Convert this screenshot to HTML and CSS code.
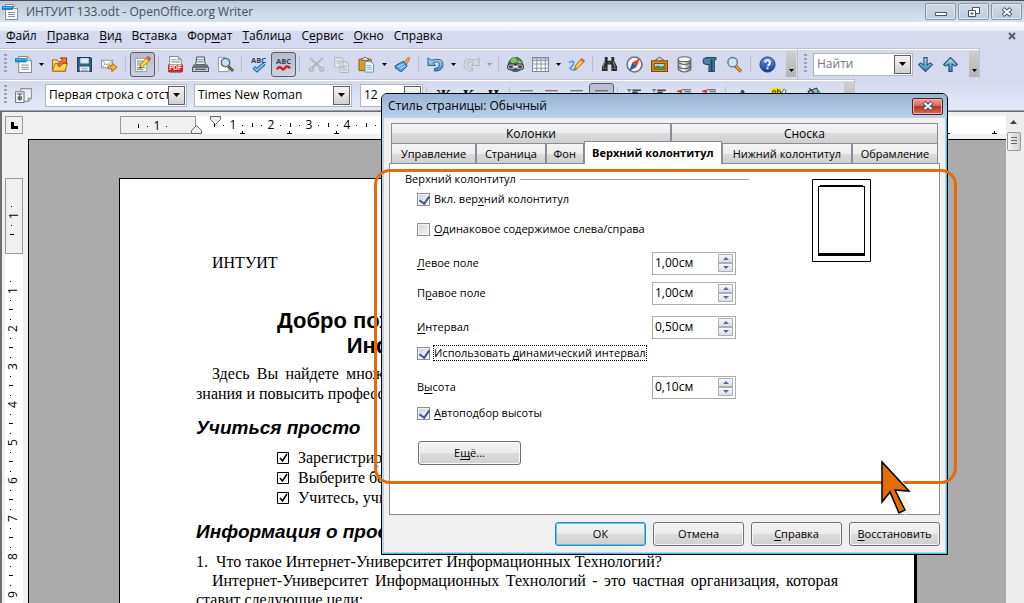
FILE: index.html
```html
<!DOCTYPE html>
<html lang="ru">
<head>
<meta charset="utf-8">
<title>ИНТУИТ 133.odt - OpenOffice.org Writer</title>
<link rel="stylesheet" href="styles.css">
</head>
<body>
<svg class="sprite" aria-hidden="true">
  <defs>
    <linearGradient id="gBlue" x1="0" y1="0" x2="0" y2="1"><stop offset="0" stop-color="#b9e2f6"/><stop offset="1" stop-color="#3585b4"/></linearGradient>
    <linearGradient id="gGold" x1="0" y1="0" x2="0" y2="1"><stop offset="0" stop-color="#ffe88c"/><stop offset="1" stop-color="#e09a16"/></linearGradient>
    <linearGradient id="gHelp" x1="0" y1="0" x2="0" y2="1"><stop offset="0" stop-color="#6e97e4"/><stop offset="1" stop-color="#12399a"/></linearGradient>
    <linearGradient id="gDb" x1="0" y1="0" x2="1" y2="0"><stop offset="0" stop-color="#9a9a9a"/><stop offset=".4" stop-color="#fff"/><stop offset="1" stop-color="#777"/></linearGradient>
  </defs>
  <symbol id="i-doc" viewBox="0 0 16 16"><path d="M3.500.5h8l4 4v11h-12z" fill="#fff" stroke="#888c92"/><path d="M11.500.5v4h4" fill="#ddd" stroke="#888c92"/><path d="M0 2h11v4H0z" fill="#1686c8"/><path d="M1 3h9v1H1z" fill="#5dbbea"/><path d="M6 8.500h7M6 10.500h7M6 12.500h7" stroke="#8a9098"/></symbol>
  <symbol id="i-open" viewBox="0 0 18 17"><path d="M1.500 15.500v-12h5l1 2h8v10z" fill="url(#gGold)" stroke="#9c6414"/><path d="M1.500 15.500l3-8h13l-3 8z" fill="#ffd75e" stroke="#a86c14"/><path d="M7 9l5-5-2-2.500h6.500V8L14 6l-5 5z" fill="#f47b20" stroke="#9b2f0a"/></symbol>
  <symbol id="i-save" viewBox="0 0 16 16"><path d="M1.500 1.500h12l1 1v12h-13z" fill="#30617f" stroke="#173b54"/><path d="M4 2h8v5H4z" fill="#dce9f0"/><path d="M3.500 10h9v4.500h-9z" fill="#f4f6f8"/><path d="M5 11.500h6M5 13.500h6" stroke="#8fa4b2"/></symbol>
  <symbol id="i-mail" viewBox="0 0 18 16"><path d="M.5 3.500h12v8H.5z" fill="#fff" stroke="#8f949a"/><path d="M.5 3.500l6 5 6-5M.5 11.500l4-4M12.500 11.500l-4-4" fill="none" stroke="#8f949a"/><path d="M7.500 9.500h4v-3l5.500 4.500-5.500 4.500v-3h-4z" fill="#fbb72c" stroke="#a96512"/></symbol>
  <symbol id="i-edit" viewBox="0 0 18 18"><path d="M1.500 2.500h12v14h-12z" fill="#fff" stroke="#9a9a9a"/><path d="M3 5.500h7M3 7.500h5M3 9.500h4M3 12.500h9M3 14.500h7" stroke="#4c86b4"/><path d="M6 13l1-4 6-7 3 3-7 7z" fill="#ffd53f" stroke="#a87911"/><path d="M13 2l2-2 3 3-2 2z" fill="#ee5567" stroke="#a72d38" stroke-width=".5"/><path d="M6 13l.5-2 1.500 1.500z" fill="#222"/></symbol>
  <symbol id="i-pdf" viewBox="0 0 16 16"><path d="M2.500.5h8l3 3v12h-11z" fill="#fff" stroke="#8d8d8d"/><path d="M10.500.5v3h3M4 3.500h5M4 5.500h8" fill="none" stroke="#999"/><path d="M1 8h14v7H1z" fill="#c91f23"/><text x="8" y="13.500" class="pdf-mark">PDF</text></symbol>
  <symbol id="i-print" viewBox="0 0 16 16"><path d="M3.500 8l1-7h7l1 7z" fill="#e9f1f6" stroke="#4a5964"/><path d="M5 3.500h6M5 5.500h6" stroke="#83929b"/><path d="M1 8h14v4H1z" fill="#6a737a"/><path d="M.5 10.500h15v4H.5z" fill="#c4cace" stroke="#53595e"/><path d="M3 12.500h10" stroke="#444"/></symbol>
  <symbol id="i-preview" viewBox="0 0 18 16"><path d="M1.500.5h7l4 4v11h-11z" fill="#fff" stroke="#92979d"/><path d="M11 9l6 6" stroke="#3d464d" stroke-width="3"/><path d="M11 9l6 6" stroke="#d98e2a"/><circle cx="9" cy="6" r="4.500" fill="#b7dcf1" fill-opacity=".9" stroke="#5a6b78" stroke-width="1.500"/></symbol>
  <symbol id="i-spell" viewBox="0 0 18 18"><text x="9" y="7" class="abc">ABC</text><path d="M4 12l3.500 3L15 8" fill="none" stroke="#1a5d9d" stroke-width="4"/><path d="M4.500 12.500l3 2.500L14.500 8.500" fill="none" stroke="#7cc4f4" stroke-width="2"/></symbol>
  <symbol id="i-auto" viewBox="0 0 18 18"><text x="9" y="8" class="abc">ABC</text><path d="M2 14q3-4 5-1t4-1q2-2 5 1" fill="none" stroke="#d21a1f" stroke-width="2.500"/></symbol>
  <symbol id="i-cut" viewBox="0 0 18 18"><path d="M2 2l12 11M16 2L4 13" stroke="#b0b4bc" stroke-width="2"/><circle cx="3.500" cy="14" r="2" fill="none" stroke="#b0b4bc" stroke-width="1.500"/><circle cx="14.500" cy="14" r="2" fill="none" stroke="#b0b4bc" stroke-width="1.500"/></symbol>
  <symbol id="i-copy" viewBox="0 0 16 16"><path d="M1.500 1.500h6l2 2v7h-8zM6.500 5.500h6l2 2v8h-8z" fill="#e4e7ef" stroke="#b5b8c0"/><path d="M3 4.500h4M3 6.500h3M8 9.500h5M8 11.500h5M8 13.500h5" stroke="#b5b8c0"/></symbol>
  <symbol id="i-paste" viewBox="0 0 18 17"><path d="M1 3h13v12H1z" fill="#d99b22" stroke="#8a5c0c"/><path d="M4 4V2h2q1.500-3 3 0h2v2z" fill="#fff" stroke="#555"/><path d="M7.500 5.500h6l3 3v8h-9z" fill="#f4f9fd" stroke="#6a8faf"/><path d="M9 9.500h5M9 11.500h6M9 13.500h6" stroke="#7da8c9"/></symbol>
  <symbol id="i-brush" viewBox="0 0 18 17"><path d="M10 7l5-6 2 1-4 7z" fill="#f2a93c" stroke="#9b5c10" stroke-width=".7"/><path d="M1 10l9-5 4 5-6 6-3-1-1-2-2 0z" fill="#5ba1e2" stroke="#1c4f8f"/><path d="M4 11l6-3M6 13l6-3" stroke="#d3eafb"/></symbol>
  <symbol id="i-undo" viewBox="0 0 18 16"><path d="M1 1v8h8L6.500 6.500Q13 3 13 8q0 4-5 4v3q9 0 9-7 0-8-12-4.500z" fill="url(#gBlue)" stroke="#285b7c"/></symbol>
  <symbol id="i-redo" viewBox="0 0 18 16"><path d="M17 1v8H9l2.500-2.500Q5 3 5 8q0 4 5 4v3Q1 15 1 8q0-8 12-4.500z" fill="#d5d8df" stroke="#afb2b8"/></symbol>
  <symbol id="i-link" viewBox="0 0 18 18"><circle cx="9" cy="9" r="7.500" fill="#2f719b" stroke="#204c66"/><path d="M3 5q4-5 7-3l1 4-5 2zM12 4l4 3-2 4-3-3z" fill="#8fc045"/><rect x="1.500" y="9.500" width="7" height="4" rx="2" fill="none" stroke="#333" stroke-width="3"/><rect x="9.500" y="9.500" width="7" height="4" rx="2" fill="none" stroke="#333" stroke-width="3"/><rect x="1.500" y="9.500" width="7" height="4" rx="2" fill="none" stroke="#ddd"/><rect x="9.500" y="9.500" width="7" height="4" rx="2" fill="none" stroke="#ddd"/><path d="M6 11.500h6" stroke="#fff" stroke-width="1.500"/></symbol>
  <symbol id="i-table" viewBox="0 0 16 14"><path d="M.5.5h15v13H.5z" fill="#fff" stroke="#79838f"/><path d="M1 1h14v2H1z" fill="#bfc9d3"/><path d="M0 3.500h16M0 6.500h16M0 10.500h16M4.500 0v14M8.500 0v14M12.500 0v14" stroke="#8c96a2"/></symbol>
  <symbol id="i-draw" viewBox="0 0 18 16"><path d="M1 6q5-3 5 0T2 12q3 3 7 1" fill="none" stroke="#4b8fd8" stroke-width="1.500"/><path d="M7 13l1-4 6-7 3 3-7 7z" fill="#ffca38" stroke="#95620d"/><path d="M13 3l2-2 3 3-2 2z" fill="#e4536b"/></symbol>
  <symbol id="i-find" viewBox="0 0 18 16"><path d="M4 0h3v4h4V0h3v4l3 6v5h-6V8H7v7H1v-5l3-6z" fill="#2b2b2b"/><path d="M4 5l-2 6M13 5l2 6" stroke="#999"/><path d="M2 12h4M12 12h4M8 6h2" stroke="#777"/></symbol>
  <symbol id="i-nav" viewBox="0 0 16 16"><circle cx="8" cy="8" r="7" fill="#f4f4f4" stroke="#6d7378" stroke-width="1.500"/><path d="M13 2L10 10 6 6z" fill="#e33"/><path d="M3 14l3-8 4 4z" fill="#1760b4"/></symbol>
  <symbol id="i-gallery" viewBox="0 0 16 16"><path d="M4 4l4-3 4 3" fill="none" stroke="#8b6a43"/><path d="M.5 4.500h15v10H.5z" fill="#d88a1d" stroke="#7f450a"/><path d="M3 7h10v5.500H3z" fill="#a5d8f5" stroke="#8b4d0a"/><path d="M3.500 12v-2l3-1 3 1 3-1v3z" fill="#4c8a2f"/></symbol>
  <symbol id="i-db" viewBox="0 0 14 16"><path d="M1 3v10q6 4 12 0V3z" fill="url(#gDb)" stroke="#666"/><ellipse cx="7" cy="3" rx="6" ry="2.300" fill="#f5f5f5" stroke="#666"/><path d="M1 6q6 4 12 0M1 10q6 4 12 0" fill="none" stroke="#555"/></symbol>
  <symbol id="i-para" viewBox="0 0 14 16"><path d="M5 1.500h8v2h-1.500v11h-2v-11h-1v11h-2V8H5Q1 8 1 5t4-3.500z" fill="#4c86a9" stroke="#1f4660"/></symbol>
  <symbol id="i-zoom" viewBox="0 0 18 17"><path d="M9 9l7 7" stroke="#8b5616" stroke-width="3.500"/><path d="M10 10l6 6" stroke="#f0b03f" stroke-width="1.500"/><circle cx="7" cy="6" r="5" fill="#cbe6f6" stroke="#667a8a" stroke-width="1.500"/></symbol>
  <symbol id="i-help" viewBox="0 0 18 18"><circle cx="9" cy="9" r="8" fill="url(#gHelp)" stroke="#183474"/><path d="M6.500 7q0-2.500 2.500-2.500T11.500 7 9 10.500M9 12v2" fill="none" stroke="#fff" stroke-width="2"/></symbol>
  <symbol id="i-down" viewBox="0 0 16 16"><path d="M6.500 1.500h3v7l3-2 2 1.500-6.500 6.500L1.500 8l2-1.500 3 2z" fill="url(#gBlue)" stroke="#234f70"/></symbol>
  <symbol id="i-up" viewBox="0 0 16 16"><path d="M6.500 14.500h3v-7l3 2 2-1.500L8 1.500 1.500 8l2 1.500 3-2z" fill="url(#gBlue)" stroke="#234f70"/></symbol>
  <symbol id="i-styles" viewBox="0 0 16 16"><path d="M5.500 1.500h10v9l-3 3h-7z" fill="#eceef3" stroke="#8f949c"/><path d="M12.500 13v-2.500h3" fill="none" stroke="#8f949c"/><path d="M.5 4.500h8v10h-8z" fill="#f7f7f9" stroke="#777d87"/><path d="M2 6.500h5M4.500 6v7M3 9.500h3v2H3z" fill="none" stroke="#4d535e"/></symbol>
  <symbol id="i-align" viewBox="0 0 16 16"><path d="M2 3.500h12M2 6.500h12M2 9.500h12M2 12.500h12" stroke="#555"/></symbol>
  <symbol id="i-list" viewBox="0 0 16 16"><path d="M1 2.500h4M3 2v3" stroke="#2c6a94"/><path d="M6 3h8M6 5h5M6 9h8M6 12h8" stroke="#444" stroke-width="1.500"/><circle cx="3" cy="10" r="1.500" fill="#2c6a94"/></symbol>
  <symbol id="i-indent" viewBox="0 0 16 16"><path d="M6 2.500h8M8 4.500h6M8 8.500h6M3 12.500h11" stroke="#555"/><path d="M1 4l4-1v2z" stroke="#c33" fill="#c33"/></symbol>
  <symbol id="i-mark" viewBox="0 0 18 16"><path d="M1 0h11v8H1z" fill="#ffe000"/><path d="M3 6V3h3v3zM8 1v5h3V3H8" fill="none" stroke="#333"/><path d="M10 9l5-8 2 2-3 8z" fill="#eee" stroke="#555"/></symbol>
  <symbol id="i-bucket" viewBox="0 0 16 16"><path d="M2 4l8-3 5 9-8 4z" fill="#9fb4c2" stroke="#333"/><path d="M3 1l7 7" stroke="#333"/><path d="M10 3q5 0 5 9-4-3-5-9z" fill="#338cc2"/></symbol>
  <symbol id="i-caret" viewBox="0 0 7 4"><path d="M0 0h7L3.500 4z" fill="currentColor"/></symbol>
  <symbol id="i-x" viewBox="0 0 12 10"><path d="M2 1.500l8 7M10 1.500l-8 7" stroke="#4b5266" stroke-width="4"/><path d="M2.500 2l7 6M9.500 2l-7 6" stroke="#fff" stroke-width="2"/></symbol>
  <symbol id="i-check" viewBox="0 0 13 13"><path d="M.5.5h11v11H.5z" fill="#fff" stroke="#000"/><path d="M3 6l2.500 3L10 2" fill="none" stroke="#000" stroke-width="1.500"/></symbol>
</svg>

<div class="window">
  <header class="titlebar">
    <svg class="ico"><use href="#i-doc"/></svg>
    <span class="titlebar-text">ИНТУИТ 133.odt - OpenOffice.org Writer</span>
    <button class="win-btn" aria-label="Свернуть"><svg viewBox="0 0 12 10"><path d="M.5 5.500h11v3H.5z" fill="#fff" stroke="#4b5266"/></svg></button>
    <button class="win-btn" aria-label="Восстановить окно"><svg viewBox="0 0 12 10"><path d="M4.500.5h7v6h-7z" fill="#fff" stroke="#4b5266"/><path d="M.5 3.500h7v6h-7zM3 6h2v1H3z" fill="#fff" stroke="#4b5266"/></svg></button>
    <button class="win-btn" aria-label="Закрыть"><svg><use href="#i-x"/></svg></button>
  </header>

  <nav class="menubar">
    <button><u>Ф</u>айл</button><button><u>П</u>равка</button><button><u>В</u>ид</button><button>Вс<u>т</u>авка</button><button>Фор<u>м</u>ат</button><button><u>Т</u>аблица</button><button>С<u>е</u>рвис</button><button><u>О</u>кно</button><button>Спр<u>а</u>вка</button>
    <button class="menu-close" aria-label="Закрыть документ"><svg viewBox="0 0 8 8"><path d="M1 1l6 6M7 1L1 7" stroke="#4f5f78" stroke-width="2"/></svg></button>
  </nav>

  <div class="toolrow">
    <div class="toolbar toolbar-main">
      <span class="grip"></span>
      <button class="tool" aria-label="Создать"><svg><use href="#i-doc"/></svg></button><button class="drop" aria-label="Варианты создания"><svg><use href="#i-caret"/></svg></button>
      <button class="tool" aria-label="Открыть"><svg><use href="#i-open"/></svg></button>
      <button class="tool" aria-label="Сохранить"><svg><use href="#i-save"/></svg></button>
      <button class="tool" aria-label="Отправить"><svg><use href="#i-mail"/></svg></button>
      <span class="sep"></span>
      <button class="tool pressed" aria-label="Правка файла"><svg><use href="#i-edit"/></svg></button>
      <span class="sep"></span>
      <button class="tool" aria-label="Экспорт в PDF"><svg><use href="#i-pdf"/></svg></button>
      <button class="tool" aria-label="Печать"><svg><use href="#i-print"/></svg></button>
      <button class="tool" aria-label="Просмотр"><svg><use href="#i-preview"/></svg></button>
      <span class="sep"></span>
      <button class="tool" aria-label="Орфография"><svg><use href="#i-spell"/></svg></button>
      <button class="tool pressed" aria-label="Автопроверка"><svg><use href="#i-auto"/></svg></button>
      <span class="sep"></span>
      <button class="tool" aria-label="Вырезать"><svg><use href="#i-cut"/></svg></button>
      <button class="tool" aria-label="Копировать"><svg><use href="#i-copy"/></svg></button>
      <button class="tool" aria-label="Вставить"><svg><use href="#i-paste"/></svg></button><button class="drop" aria-label="Варианты вставки"><svg><use href="#i-caret"/></svg></button>
      <button class="tool" aria-label="Кисть"><svg><use href="#i-brush"/></svg></button>
      <span class="sep"></span>
      <button class="tool" aria-label="Отменить"><svg><use href="#i-undo"/></svg></button><button class="drop" aria-label="Список отмены"><svg><use href="#i-caret"/></svg></button>
      <button class="tool" aria-label="Вернуть"><svg><use href="#i-redo"/></svg></button><button class="drop off" aria-label="Список возврата"><svg><use href="#i-caret"/></svg></button>
      <span class="sep"></span>
      <button class="tool" aria-label="Гиперссылка"><svg><use href="#i-link"/></svg></button>
      <button class="tool" aria-label="Таблица"><svg><use href="#i-table"/></svg></button><button class="drop" aria-label="Размер таблицы"><svg><use href="#i-caret"/></svg></button>
      <button class="tool" aria-label="Рисование"><svg><use href="#i-draw"/></svg></button>
      <span class="sep"></span>
      <button class="tool" aria-label="Найти и заменить"><svg><use href="#i-find"/></svg></button>
      <button class="tool" aria-label="Навигатор"><svg><use href="#i-nav"/></svg></button>
      <button class="tool" aria-label="Галерея"><svg><use href="#i-gallery"/></svg></button>
      <button class="tool" aria-label="Источники данных"><svg><use href="#i-db"/></svg></button>
      <button class="tool" aria-label="Непечатаемые символы"><svg><use href="#i-para"/></svg></button>
      <button class="tool" aria-label="Масштаб"><svg><use href="#i-zoom"/></svg></button>
      <span class="sep"></span>
      <button class="tool" aria-label="Справка"><svg><use href="#i-help"/></svg></button>
      <button class="overflow" aria-label="Ещё кнопки"><svg><use href="#i-caret"/></svg></button>
    </div>
    <div class="toolbar toolbar-find">
      <span class="grip"></span>
      <div class="combo combo-find"><input type="text" placeholder="Найти" aria-label="Найти"><button aria-label="Журнал поиска"><svg><use href="#i-caret"/></svg></button></div>
      <button class="tool" aria-label="Найти далее"><svg><use href="#i-down"/></svg></button>
      <button class="tool" aria-label="Найти ранее"><svg><use href="#i-up"/></svg></button>
      <button class="overflow" aria-label="Ещё кнопки поиска"><svg><use href="#i-caret"/></svg></button>
    </div>
  </div>

  <div class="toolrow toolrow-format">
    <div class="toolbar">
      <span class="grip"></span>
      <button class="tool tool-styles" aria-label="Стили"><svg><use href="#i-styles"/></svg></button>
      <div class="combo combo-style"><input type="text" value="Первая строка с отступом" aria-label="Стиль абзаца"><button aria-label="Список стилей"><svg><use href="#i-caret"/></svg></button></div>
      <div class="combo combo-font"><input type="text" value="Times New Roman" aria-label="Гарнитура"><button aria-label="Список гарнитур"><svg><use href="#i-caret"/></svg></button></div>
      <div class="combo combo-size"><input type="text" value="12" aria-label="Кегль"><button aria-label="Список кеглей"><svg><use href="#i-caret"/></svg></button></div>
      <span class="sep"></span>
      <button class="tool letter">Ж</button><button class="tool letter">К</button><button class="tool letter">Ч</button>
      <span class="sep"></span>
      <button class="tool" aria-label="По левому краю"><svg><use href="#i-align"/></svg></button>
      <button class="tool" aria-label="По центру"><svg><use href="#i-align"/></svg></button>
      <button class="tool" aria-label="По правому краю"><svg><use href="#i-align"/></svg></button>
      <button class="tool pressed" aria-label="По ширине"><svg><use href="#i-align"/></svg></button>
      <span class="sep"></span>
      <button class="tool" aria-label="Нумерация"><svg><use href="#i-list"/></svg></button>
      <button class="tool" aria-label="Маркеры"><svg><use href="#i-list"/></svg></button>
      <button class="tool" aria-label="Уменьшить отступ"><svg><use href="#i-indent"/></svg></button>
      <button class="tool" aria-label="Увеличить отступ"><svg><use href="#i-indent"/></svg></button>
      <span class="sep"></span>
      <button class="tool letter letter-blue">A</button><button class="drop" aria-label="Цвет шрифта"><svg><use href="#i-caret"/></svg></button>
      <button class="tool" aria-label="Фон символов"><svg><use href="#i-mark"/></svg></button><button class="drop" aria-label="Цвет фона символов"><svg><use href="#i-caret"/></svg></button>
      <button class="tool" aria-label="Цвет фона"><svg><use href="#i-bucket"/></svg></button><button class="drop" aria-label="Цвет фона абзаца"><svg><use href="#i-caret"/></svg></button>
      <button class="overflow" aria-label="Ещё кнопки форматирования"><svg><use href="#i-caret"/></svg></button>
    </div>
  </div>

  <main class="workspace">
    <button class="tabstop" aria-label="Тип табуляции"><svg viewBox="0 0 7 7"><path d="M1.500 0v5.500H7" fill="none" stroke="#000" stroke-width="3"/></svg></button>
    <div class="hruler">
      <div class="h-margin"><span class="cm">1</span></div>
      <svg class="marks" viewBox="0 0 30 18"><path d="M.5 17.500v-3l5-5 5 5v3z" fill="#eee" stroke="#666"/><path d="M19.500.5h10v3l-5 5-5-5z" fill="#eee" stroke="#666"/></svg>
      <div class="h-body"><span class="cm">1</span><span class="cm">2</span><span class="cm">3</span><span class="cm">4</span><span class="cm">5</span><span class="cm">6</span><span class="cm">7</span></div>
    </div>
    <div class="vruler">
      <div class="v-margin"><span class="cm">1</span></div>
      <div class="v-body"><span class="cm">1</span><span class="cm">2</span><span class="cm">3</span><span class="cm">4</span><span class="cm">5</span><span class="cm">6</span><span class="cm">7</span><span class="cm">8</span><span class="cm">9</span></div>
    </div>
    <div class="canvas">
      <article class="page">
        <p class="running">ИНТУИТ</p>
        <h1>Добро пожаловать в Интернет-Университет<br>Информационных Технологий!</h1>
        <p class="full">Здесь Вы найдете множество учебных курсов, которые помогут получить самые новые</p>
        <p class="flush">знания и повысить профессиональный уровень.</p>
        <h2>Учиться просто</h2>
        <ul>
          <li><svg><use href="#i-check"/></svg>Зарегистрируйтесь на сайте</li>
          <li><svg><use href="#i-check"/></svg>Выберите бесплатный курс</li>
          <li><svg><use href="#i-check"/></svg>Учитесь, учитывая советы</li>
        </ul>
        <h2>Информация о проекте</h2>
        <p class="flush tight">1.&nbsp; Что такое Интернет-Университет Информационных Технологий?</p>
        <p class="full tight">Интернет-Университет Информационных Технологий - это частная организация, которая</p>
        <p class="flush tight">ставит следующие цели:</p>
      </article>
    </div>
    <div class="scrollbar">
      <svg viewBox="0 0 7 4"><path d="M0 4h7L3.500 0z" fill="#444"/></svg>
      <span class="thumb"></span>
    </div>
  </main>
</div>

<section class="dialog" role="dialog" aria-labelledby="dlg-title">
  <header class="dlg-head">
    <h3 id="dlg-title">Стиль страницы: Обычный</h3>
    <button class="dlg-close" aria-label="Закрыть"><svg><use href="#i-x"/></svg></button>
  </header>
  <div class="dlg-body">
    <div class="tabs tabs-back" role="tablist"><button role="tab">Колонки</button><button role="tab">Сноска</button></div>
    <div class="tabs tabs-front" role="tablist">
      <button role="tab">Управление</button><button role="tab">Страница</button><button role="tab">Фон</button><button role="tab" class="active" aria-selected="true">Верхний колонтитул</button><button role="tab">Нижний колонтитул</button><button role="tab">Обрамление</button>
    </div>
    <div class="panel">
      <form class="form">
        <div class="legend">Верхний колонтитул</div>
        <label class="row"><input type="checkbox" checked><span>Вкл. вер<u>х</u>ний колонтитул</span></label>
        <label class="row near"><input type="checkbox"><span><u>О</u>динаковое содержимое слева/справа</span></label>
        <div class="row far"><label for="left"><u>Л</u>евое поле</label><div class="spin"><input id="left" type="text" value="1,00см"><span class="spin-btns"><button type="button" aria-label="Больше"></button><button type="button" aria-label="Меньше"></button></span></div></div>
        <div class="row near"><label for="right">П<u>р</u>авое поле</label><div class="spin"><input id="right" type="text" value="1,00см"><span class="spin-btns"><button type="button" aria-label="Больше"></button><button type="button" aria-label="Меньше"></button></span></div></div>
        <div class="row far"><label for="gap"><u>И</u>нтервал</label><div class="spin"><input id="gap" type="text" value="0,50см"><span class="spin-btns"><button type="button" aria-label="Больше"></button><button type="button" aria-label="Меньше"></button></span></div></div>
        <label class="row close"><input type="checkbox" checked><span class="focused">Использовать <u>д</u>инамический интервал</span></label>
        <div class="row far"><label for="high">В<u>ы</u>сота</label><div class="spin"><input id="high" type="text" value="0,10см"><span class="spin-btns"><button type="button" aria-label="Больше"></button><button type="button" aria-label="Меньше"></button></span></div></div>
        <label class="row close"><input type="checkbox" checked><span><u>А</u>втоподбор высоты</span></label>
        <button type="button" class="btn more">Е<u>щ</u>ё...</button>
      </form>
      <svg class="preview" viewBox="0 0 59 83"><path d="M.5.500h58v82H.500z" fill="#fff" stroke="#000"/><path d="M6.500 7v70M52.500 7v70M6 7.500h47" stroke="#000"/><path d="M8 6.500h43" stroke="#000"/><path d="M6 75.500h47" stroke="#000" stroke-width="3"/></svg>
    </div>
    <footer class="dlg-foot">
      <button class="btn default">ОК</button><button class="btn">Отмена</button><button class="btn"><u>С</u>правка</button><button class="btn"><u>В</u>осстановить</button>
    </footer>
  </div>
</section>

<div class="callout"></div>
<svg class="pointer" viewBox="0 0 34 56"><path d="M7 6v40l8-9 10 18 8-4-9-18 9-1z" fill="#f5f2e6"/><path d="M2 2v40l8-10 9 21 6-3-10-20 14 1z" fill="#e46c0a" stroke="#000" stroke-width="1.500"/></svg>
</body>
</html>
```

FILE: styles.css
```css
* { box-sizing: border-box; }

html, body { height: 100%; }

body {
  margin: 0;
  position: relative;
  overflow: hidden;
  font: 12px/16px "Open Sans", "Noto Sans", sans-serif;
  color: #000;
}

button, input {
  font: inherit;
  color: inherit;
  margin: 0;
  padding: 0;
  border: 0;
  background: none;
  border-radius: 0;
}

svg { display: block; flex: none; }
.sprite { position: absolute; width: 0; height: 0; }
.abc { font: bold 8px "Open Sans", sans-serif; text-anchor: middle; fill: #27475f; }
.pdf-mark { font: bold 6px "Liberation Sans", sans-serif; text-anchor: middle; fill: #fff; }
u { text-underline-offset: 2px; }

/* main window */
.window {
  height: 100%;
  display: flex;
  flex-direction: column;
  background: #d4d9ed;
}

.titlebar {
  flex: none;
  height: 22px;
  display: flex;
  align-items: center;
  gap: 2px;
  padding: 0 2px;
  border-top: 1px solid #4b4b50;
  background: linear-gradient(#bccadb, #d5e2f0);
}
.titlebar .ico { width: 16px; height: 16px; }
.titlebar-text { flex: 1; padding-left: 6px; color: #48505c; }
.win-btn {
  width: 31px;
  height: 17px;
  display: grid;
  place-items: center;
  border: 1px solid #8795ab;
  border-radius: 2px;
  background: linear-gradient(#cfdae8, #bccbdf);
  box-shadow: inset 0 0 0 1px #dde6f1;
}
.win-btn svg { width: 12px; height: 10px; }

.menubar {
  flex: none;
  height: 26px;
  display: flex;
  align-items: center;
  gap: 10px;
  padding: 2px 8px 0 6px;
  background: linear-gradient(#fff, #e6ebf6 9px, #d4d9ed 9px);
}
.menu-close { margin-left: auto; }
.menu-close svg { width: 8px; height: 8px; }

.toolrow { flex: none; height: 31px; display: flex; }
.toolbar {
  display: flex;
  align-items: center;
  border: solid #c1c3ca;
  border-width: 1px 1px 0 0;
  box-shadow: inset 0 1px #fff;
  padding-left: 4px;
}
.toolbar-main { padding-right: 1px; }
.toolbar-find { padding-left: 6px; }
.toolrow-format { height: 32px; background: linear-gradient(#d4d9ed, #e4e9f9); border-bottom: 1px solid #9aa0ad; }
.grip {
  width: 3px;
  height: 20px;
  margin-right: 4px;
  background: repeating-linear-gradient(#9da1b0 0 2px, transparent 2px 4px);
}
.toolbar-find .grip { margin-right: 6px; }
.tool { width: 25px; height: 25px; display: grid; place-items: center; flex: none; }
.tool svg { width: 17px; height: 17px; }
.pressed {
  border: 1px solid #5a5e68;
  border-radius: 3px;
  background: linear-gradient(#b8bccb, #cdd1e0);
}
.drop { width: 11px; height: 25px; display: grid; place-items: center; flex: none; }
.drop svg { width: 5px; height: 3px; }
.off { color: #9a9ca4; }
.sep { width: 8px; height: 16px; flex: none; background: linear-gradient(#bcbec6, #bcbec6) 3px 0 / 1px 100% no-repeat; }
.overflow {
  width: 10px;
  height: 26px;
  margin-left: 6px;
  display: grid;
  place-items: end center;
  padding-bottom: 5px;
  background: linear-gradient(#cfcfcf, #b4b4b4);
}
.overflow svg { width: 5px; height: 3px; }

.combo {
  height: 23px;
  display: flex;
  flex: none;
  padding: 1px;
  border: 1px solid #b4b6bd;
  background: #fff;
}
.combo input { flex: 1; min-width: 0; padding-left: 2px; }
.combo input::placeholder { color: #76767c; opacity: 1; }
.combo button {
  width: 17px;
  display: grid;
  place-items: center;
  border: 1px solid #606060;
  background: linear-gradient(#f4f4f4, #cfcfcf);
}
.combo button svg { width: 7px; height: 4px; }
.combo-find { width: 100px; }
.combo-style { width: 142px; margin-right: 7px; }
.combo-font { width: 158px; margin-right: 8px; }
.combo-size { width: 63px; }
.tool-styles { margin-right: 9px; }
.letter { font: bold 15px/20px "Liberation Serif", serif; }
.letter-blue { color: #23506f; }

/* rulers and document */
.workspace {
  flex: 1;
  min-height: 0;
  display: grid;
  grid-template: 27px 1fr / 26px 1fr 18px;
  border-left: 2px solid #6e6e6e;
  border-top: 1px solid #6e6e6e;
  background: #f0f0f0;
}
.tabstop {
  width: 18px;
  height: 18px;
  margin: 4px 0 0 3px;
  display: grid;
  place-items: center;
  border: 1px solid #9a9a9a;
}
.tabstop svg { width: 7px; height: 7px; }
.hruler { display: flex; padding: 4px 0 5px 92px; min-width: 0; overflow: hidden; }
.h-margin { width: 76px; flex: none; display: flex; padding-left: 17px; border: 1px solid #9a9a9a; }
.h-body {
  flex: 1;
  min-width: 0;
  display: flex;
  padding-left: 18px;
  background:
    linear-gradient(90deg, transparent 42px, #000 42px) 2px 100% / 47px 1px repeat-x,
    linear-gradient(90deg, transparent 46px, #000 46px) 0 100% / 47px 3px repeat-x,
    #fff;
}
.marks { width: 30px; height: 18px; margin: 0 -25px 0 -5px; z-index: 1; }
.cm {
  width: 38px;
  flex: none;
  text-align: center;
  line-height: 17px;
  background:
    linear-gradient(#000, #000) 0 7px / 1px 4px no-repeat,
    linear-gradient(#000, #000) 9px 9px / 1px 1px no-repeat,
    linear-gradient(#000, #000) 28px 9px / 1px 1px no-repeat;
}
.vruler { display: flex; flex-direction: column; padding: 39px 5px 0 3px; min-height: 0; overflow: hidden; }
.v-margin { height: 76px; flex: none; padding-top: 18px; border: 1px solid #9a9a9a; }
.v-body { flex: 1; min-height: 0; padding-top: 18px; background: #fff; }
.vruler .cm {
  display: block;
  width: auto;
  height: 38px;
  writing-mode: vertical-lr;
  line-height: 15px;
  transform: rotate(180deg);
  background:
    linear-gradient(#000, #000) 7px 0 / 4px 1px no-repeat,
    linear-gradient(#000, #000) 9px 9px / 1px 1px no-repeat,
    linear-gradient(#000, #000) 9px 28px / 1px 1px no-repeat;
}
.canvas {
  min-width: 0;
  min-height: 0;
  overflow: hidden;
  padding: 38px 89px 0 90px;
  border: solid #000;
  border-width: 1px 0 0 1px;
  background: #ababab;
}
.page {
  min-height: 100%;
  padding: 74px 76px 0 76px;
  border: solid #000;
  border-width: 1px 3px 0 1px;
  background: #fff;
  font: 16px/20px "Liberation Serif", serif;
  white-space: nowrap;
}
.page p { margin: 0; }
.page .running { padding-left: 16px; }
.page h1 { margin: 35px 0 6px; text-align: center; font: bold 22px/25px "Liberation Sans", sans-serif; }
.page h2 { margin: 11px 0 7px; font: italic bold 19px/26px "Liberation Sans", sans-serif; }
.page .full { padding-left: 16px; text-align: justify; text-align-last: justify; }
.page .tight { line-height: 19px; }
.page ul { margin: 0; padding: 0 0 0 81px; list-style: none; }
.page li { display: flex; align-items: center; gap: 8px; }
.page li svg { width: 13px; height: 13px; }

.scrollbar {
  grid-row: 1 / 3;
  grid-column: 3;
  display: flex;
  flex-direction: column;
  align-items: center;
  gap: 8px;
  padding: 8px 3px 0 0;
  background: #ededed;
}
.scrollbar svg { width: 7px; height: 4px; }
.thumb {
  width: 14px;
  height: 19px;
  border: 1px solid #989898;
  border-radius: 2px;
  background:
    repeating-linear-gradient(#666 0 1px, transparent 1px 3px) 3px 4px / 6px 9px no-repeat,
    linear-gradient(90deg, #f5f5f5, #d0d0d0);
}

/* dialog */
.dialog {
  position: absolute;
  left: 381px;
  top: 93px;
  width: 567px;
  border: 1px solid #000;
  border-radius: 6px 6px 0 0;
  background: #b9d1ea;
  box-shadow: inset -1px -1px #35c5e4;
  font-size: 11px;
}
.dlg-head {
  height: 24px;
  display: flex;
  align-items: center;
  justify-content: space-between;
  padding: 0 4px 0 6px;
  border-radius: 5px 5px 0 0;
  background: linear-gradient(#98b4d3, #b9d1ea);
  font-size: 12px;
}
.dlg-head h3 { margin: 0; font: inherit; }
.dlg-close {
  width: 31px;
  height: 17px;
  display: grid;
  place-items: center;
  border: 1px solid #5a1f22;
  border-radius: 2px;
  background: linear-gradient(#e8a39a, #d0655a 50%, #b93222 50%, #d3705e);
  box-shadow: inset 0 0 0 1px #eab2aa;
}
.dlg-close svg { width: 12px; height: 10px; }
.dlg-body { margin: 0 2px 2px; padding: 5px 5px 6px; background: #f0f0f0; }
.tabs { display: flex; margin: 0 2px; }
.tabs button {
  height: 20px;
  border: solid #8b8d94;
  border-width: 1px 1px 0;
  background: linear-gradient(#f4f4f4, #ededed 50%, #dcdcdc 50%, #cfcfcf);
}
.tabs-back { font-size: 12px; }
.tabs-back button:first-child { flex: 280; }
.tabs-back button:last-child { flex: 267; }
.tabs-front button:nth-child(1) { flex: 85; }
.tabs-front button:nth-child(2) { flex: 69; }
.tabs-front button:nth-child(3) { flex: 37; }
.tabs-front button:nth-child(4) { flex: 139; }
.tabs-front button:nth-child(5) { flex: 131; }
.tabs-front button:nth-child(6) { flex: 86; }
.tabs-front .active { height: 23px; margin: -2px 0 -1px; background: #fff; font-weight: bold; z-index: 1; }
.panel {
  height: 352px;
  display: flex;
  justify-content: space-between;
  padding: 7px 68px 0 15px;
  border: 1px solid #8b8d94;
  background: #fff;
}
.form { width: 344px; }
.legend { display: flex; align-items: center; gap: 4px; height: 16px; }
.legend::after { content: ""; flex: 1; height: 1px; background: #a0a0a0; }
.row { height: 24px; display: flex; align-items: center; justify-content: space-between; margin: 0 13px 0 12px; }
label.row { justify-content: flex-start; gap: 4px; }
.near { margin-top: 6px; }
.far { margin-top: 10px; }
.close { margin-top: 2px; }
.row input[type="checkbox"] {
  appearance: none;
  width: 13px;
  height: 13px;
  padding: 0 0 2px 3px;
  border: 1px solid #8e8f8f;
  background: linear-gradient(135deg, #ccd2da, #fafafa);
  box-shadow: inset 0 0 0 1px #f4f4f4;
}
.row input[type="checkbox"]:checked::before {
  content: "";
  display: block;
  width: 5px;
  height: 8px;
  border: solid #3d5590;
  border-width: 0 2px 2px 0;
  transform: rotate(35deg);
}
.focused { outline: 1px dotted #000; line-height: 14px; }
.spin { width: 84px; height: 23px; display: flex; align-items: center; border: 1px solid #abadb3; padding-right: 2px; background: #fff; font-size: 12px; }
.spin input { flex: 1; min-width: 0; padding-left: 2px; }
.spin-btns { display: flex; flex-direction: column; }
.spin-btns button { width: 15px; height: 9px; display: grid; place-items: center; border: 1px solid #adafb5; background: linear-gradient(#f8f8f8, #dedede); }
.spin-btns button::before { content: ""; border: solid transparent; border-width: 0 3px 3px; border-bottom-color: #4c68b8; }
.spin-btns button:last-child::before { border-width: 3px 3px 0; border-top-color: #4c68b8; }
.btn {
  width: 91px;
  height: 24px;
  border: 1px solid #707070;
  border-radius: 3px;
  background: linear-gradient(#f3f3f3, #ebebeb 50%, #dcdcdc 50%, #cfcfcf);
  box-shadow: inset 0 0 0 1px #f8f8f8;
}
.more { width: 103px; margin: 16px 0 0 13px; }
.default { border-color: #3c7fb1; box-shadow: inset 0 0 0 1px #48cdf5; }
.preview { width: 59px; height: 83px; margin-top: 8px; }
.dlg-foot { display: flex; justify-content: flex-end; gap: 7px; padding-top: 7px; }

/* annotation over the dialog */
.callout { position: absolute; left: 374px; top: 169px; width: 583px; height: 315px; border: 3px solid #e46c0a; border-radius: 16px; pointer-events: none; }
.pointer { position: absolute; left: 880px; top: 460px; width: 34px; height: 56px; pointer-events: none; }
```
